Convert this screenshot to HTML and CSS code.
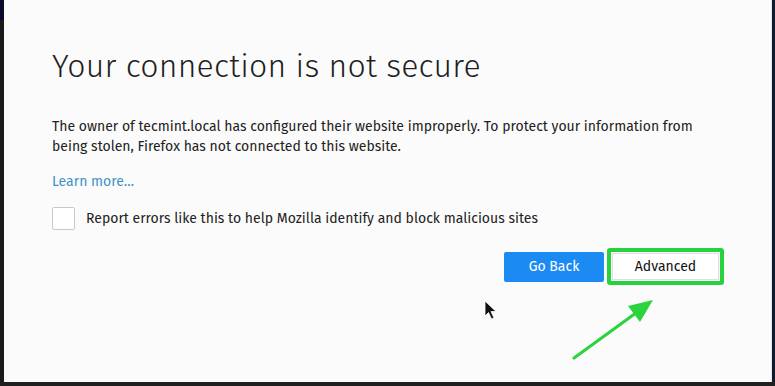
FILE: index.html
```html
<!DOCTYPE html>
<html>
<head>
<meta charset="utf-8">
<link rel="stylesheet" href="styles.css">
</head>
<body>
<div class="screen">
  <div class="leftedge"><div class="navy"></div><div class="gray"></div></div>
  <div class="page">
    <div class="content">
      <h1 class="title">Your connection is not secure</h1>
      <p class="desc">The owner of tecmint.local has configured their website improperly. To protect your information from being stolen, Firefox has not connected to this website.</p>
      <a class="learn">Learn more…</a>
      <label class="report"><span class="box"></span><span>Report errors like this to help Mozilla identify and block malicious sites</span></label>
      <div class="buttons">
        <button class="goback">Go Back</button>
        <div class="highlight"><button class="advanced">Advanced</button></div>
      </div>
    </div>
    <svg class="arrow" width="100" height="80" viewBox="0 0 100 80">
      <line x1="4" y1="76" x2="70" y2="28" stroke="#2bd33f" stroke-width="3" stroke-linecap="round"/>
      <polygon points="83,18 58,24 70,40" fill="#2bd33f"/>
    </svg>
    <svg class="cursor" width="14" height="22" viewBox="0 0 14 22">
      <path d="M1 1 L1 16 L4.5 12.5 L7.5 19 L10 18 L7 11.5 L12 11.5 Z" fill="#111" stroke="#fff" stroke-width="0.8"/>
    </svg>
  </div>
  <div class="rightedge"></div>
</div>
<div class="bottom"></div>
</body>
</html>
```
FILE: styles.css
```css
html, body { margin: 0; padding: 0; }
body {
  width: 775px; height: 386px; overflow: hidden;
  background: #1c1f26;
  font-family: "Fira Sans", "Open Sans", "Noto Sans", sans-serif;
}
.screen { display: flex; height: 382px; }
.leftedge { width: 4px; display: flex; flex-direction: column; }
.navy { height: 20px; background: #0a0a2a; }
.gray { flex: 1; background: #1a1a1a; }
.rightedge { width: 3px; background: #0d1a30; }
.bottom { height: 4px; background: #202020; }
.page {
  flex: 1; position: relative;
  background: #fbfbfb;
  border-right: 1px solid #e4e6ea;
}
.content { padding: 0 0 0 48px; width: 672px; }
.title {
  margin: 0; padding-top: 42px;
  font-weight: 300; font-size: 32px; line-height: 48px;
  color: #1f1f1f; letter-spacing: 0.2px;
}
.desc {
  margin: 27px 0 0; font-size: 14px; line-height: 20px; color: #222;
}
.learn {
  display: block; margin-top: 15px;
  font-size: 14px; line-height: 20px; color: #3f92c8;
}
.report {
  display: flex; align-items: center; gap: 11px;
  margin-top: 15px; font-size: 14px; color: #222;
}
.box {
  width: 21px; height: 21px; border: 1px solid #c9c9c9; border-radius: 2px;
  background: #fff;
}
.buttons {
  display: flex; justify-content: flex-end; align-items: center;
  gap: 3px; margin-top: 18px; padding-right: 0;
}
.goback {
  width: 100px; height: 30px; border: none; border-radius: 2px;
  background: #1b8af3; color: #fff;
  font-family: inherit; font-size: 14px;
}
.highlight {
  border: 4px solid #27d23c; border-radius: 3px; padding: 1px;
}
.advanced {
  display: block; width: 107px; height: 27px;
  background: #fff; border: 1px solid #e0e0e0;
  color: #111; font-family: inherit; font-size: 14px;
}
.arrow { position: absolute; left: 566px; top: 282px; }
.cursor { position: absolute; left: 480px; top: 300px; }
```
